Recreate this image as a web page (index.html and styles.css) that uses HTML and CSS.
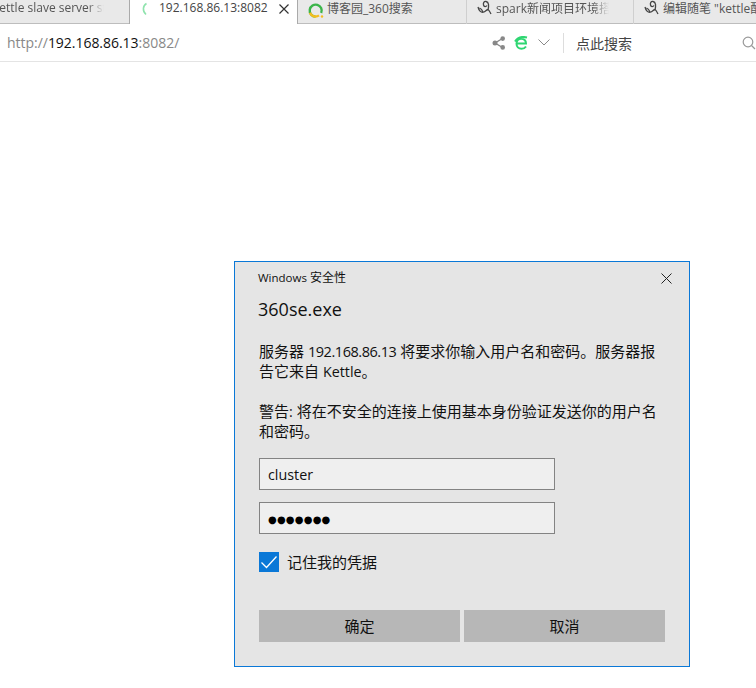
FILE: index.html
```html
<!DOCTYPE html>
<html lang="zh-CN">
<head>
<meta charset="utf-8">
<title>192.168.86.13:8082</title>
<link rel="stylesheet" href="styles.css">
</head>
<body>
<div class="tabs">
  <div class="tab tab-first"><span class="tab-text fade first-text">kettle slave server status</span></div>
  <div class="tab tab-active">
    <svg class="ic-spin" width="10" height="14" viewBox="0 0 10 14"><path d="M7.5 1.5C4 3.5 3 9 7 12.5" fill="none" stroke="#8fe3ad" stroke-width="1.6"/></svg>
    <span class="tab-text active-text">192.168.86.13:8082</span>
    <svg class="ic-close" width="10" height="10" viewBox="0 0 10 10"><path d="M.5.5l9 9M9.500.5l-9 9" stroke="#333" stroke-width="1.200" fill="none"/></svg>
  </div>
  <div class="tab tab-third">
    <svg width="17" height="17" viewBox="0 0 17 17"><path d="M14.200 11A6 6 0 1 0 8.500 14.600" fill="none" stroke="#3cb54a" stroke-width="2.400"/><path d="M2.900 10.800A6 6 0 0 0 12 13.400" fill="none" stroke="#f5bd1f" stroke-width="2.400"/><circle cx="15" cy="14.500" r="1.200" fill="#f5bd1f"/></svg>
    <span class="tab-text">博客园_360搜索</span>
  </div>
  <div class="tab tab-fourth">
    <svg width="15" height="15" viewBox="0 0 15 15"><path d="M1 7c1 4 3 6 6 5 2-1 2-2 4-2.500 1 .5 2 2.500 3 4.500M11 10c1-4 1-8-2-8.500C7 1.200 6 3 6.500 5 7 7 9 7 10 5.500M6 12C5 9.500 4 8.500 2.500 8" fill="none" stroke="#444" stroke-width="1.300"/></svg>
    <span class="tab-text fade">spark新闻项目环境搭建</span>
  </div>
  <div class="tab tab-last">
    <svg width="15" height="15" viewBox="0 0 15 15"><path d="M1 7c1 4 3 6 6 5 2-1 2-2 4-2.500 1 .5 2 2.500 3 4.500M11 10c1-4 1-8-2-8.500C7 1.200 6 3 6.500 5 7 7 9 7 10 5.500M6 12C5 9.500 4 8.500 2.500 8" fill="none" stroke="#444" stroke-width="1.300"/></svg>
    <span class="tab-text">编辑随笔 "kettle配</span>
  </div>
</div>
<div class="address">
  <div class="url"><span class="url-dim">http://</span>192.168.86.13<span class="url-dim">:8082/</span></div>
  <div class="tools">
    <svg width="14" height="14" viewBox="0 0 14 14"><path d="M10.500 2.500L3 7l7.500 4.500" fill="none" stroke="#888" stroke-width="1.400"/><circle cx="10.700" cy="2.600" r="2.300" fill="#888"/><circle cx="3" cy="7" r="2.500" fill="#888"/><circle cx="10.700" cy="11.400" r="2.300" fill="#888"/></svg>
    <svg class="ic-e" width="14" height="14" viewBox="0 0 14 14"><path d="M2.500 7.500h9.500C12 4.500 10 2.800 7.300 2.800 4.300 2.800 2.500 5 2.500 7.800s2 5 5 5c2 0 3.500-.8 4.500-2.300M1 5.500C3.500 1.500 8 .2 13 1.500" fill="none" stroke="#2fd672" stroke-width="2"/></svg>
    <svg class="ic-chev" width="12" height="7" viewBox="0 0 12 7"><path d="M.5.5L6 6l5.500-5.500" fill="none" stroke="#8a8a8a"/></svg>
    <div class="divider"></div>
    <div class="search-hint">点此搜索</div>
    <svg class="ic-search" width="14" height="14" viewBox="0 0 14 14"><circle cx="6" cy="6" r="4.800" fill="none" stroke="#999" stroke-width="1.200"/><path d="M9.500 9.500l3.500 3.500" stroke="#999" stroke-width="1.200"/></svg>
  </div>
</div>
<div class="dialog">
  <div class="dialog-head">
    <span class="dialog-caption"><span class="lat-sm">Windows</span> 安全性</span>
    <svg width="11" height="11" viewBox="0 0 11 11"><path d="M.5.5l10 10M10.500.5l-10 10" stroke="#222" fill="none"/></svg>
  </div>
  <div class="dialog-title">360se.exe</div>
  <p class="dialog-msg">服务器 <span class="lat-num">192.168.86.13</span> 将要求你输入用户名和密码。服务器报告它来自 <span class="lat">Kettle</span>。</p>
  <p class="dialog-msg">警告<span class="lat">:</span> 将在不安全的连接上使用基本身份验证发送你的用户名和密码。</p>
  <div class="field"><span class="lat">cluster</span></div>
  <div class="field field-pass"><span class="dots">●●●●●●●</span></div>
  <div class="remember">
    <span class="check"><svg width="20" height="20" viewBox="0 0 20 20"><path d="M2.500 10.500l5 5L17.500 4.500" fill="none" stroke="#fff" stroke-width="1.300"/></svg></span>
    <span>记住我的凭据</span>
  </div>
  <div class="buttons">
    <div class="btn">确定</div>
    <div class="btn">取消</div>
  </div>
</div>
</body>
</html>
```

FILE: styles.css
```css
* { box-sizing: border-box; }
html, body { margin: 0; padding: 0; }
body {
  width: 756px;
  height: 688px;
  position: relative;
  overflow: hidden;
  background: #fff;
  font-family: "Open Sans", "Noto Sans CJK SC", sans-serif;
  color: #111;
}
svg { flex: none; }
.tabs {
  display: flex;
  height: 24px;
  background: #e9e9e9;
  border-bottom: 1px solid #bdbdbd;
  font-size: 12px;
  color: #555;
}
.tab {
  height: 24px;
  display: flex;
  align-items: center;
  overflow: hidden;
  border-right: 1px solid #cfcfcf;
  padding-bottom: 9px;
  flex: none;
}
.tab-text { white-space: nowrap; overflow: hidden; }
.fade {
  -webkit-mask-image: linear-gradient(to right, #000 85%, transparent 100%);
  mask-image: linear-gradient(to right, #000 85%, transparent 100%);
}
.tab-first { width: 130px; border-right: 1px solid #aaa; }
.first-text { width: 111px; margin-left: -7px; flex: none; }
.tab-active {
  width: 168px;
  background: #fff;
  border-right: 1px solid #aaa;
  padding-left: 9px;
  padding-right: 8px;
}
.ic-spin, .ic-close { margin-top: 3px; }
.active-text { margin-left: 10px; flex: 1; color: #444; }
.tab-third { width: 169px; padding-left: 9px; gap: 3px; }
.tab-third svg { margin-top: 5px; }
.tab-fourth { width: 167px; padding-left: 10px; gap: 4px; }
.tab-fourth .tab-text { width: 113px; }
.tab-last { flex: 1; padding-left: 10px; gap: 4px; border-right: 0; }
.tab-last .tab-text { flex: none; }
.address {
  height: 38px;
  display: flex;
  align-items: center;
  justify-content: space-between;
  border-bottom: 1px solid #e4e4e4;
  padding-left: 7px;
}
.url { font-size: 14px; color: #111; letter-spacing: -.03px; }
.url-dim { color: #888; }
.tools { display: flex; align-items: center; width: 264px; flex: none; }
.ic-e { margin-left: 8px; }
.ic-chev { margin-left: 10px; }
.divider { width: 1px; height: 20px; background: #ddd; margin-left: 13px; }
.search-hint { font-size: 14px; color: #444; margin-left: 12px; width: 168px; }
.dialog {
  position: absolute;
  left: 234px;
  top: 261px;
  width: 456px;
  height: 406px;
  background: #e5e5e5;
  border: 1px solid #0a78d7;
  padding: 0 24px;
  font-size: 15px;
}
.lat { font-size: 14.300px; line-height: 1; }
.lat-num { font-size: 14.500px; letter-spacing: -.45px; line-height: 1; }
.lat-sm { font-size: 11.500px; line-height: 1; }
.dialog-head {
  height: 32px;
  display: flex;
  align-items: center;
  justify-content: space-between;
  margin-right: -7px;
  margin-left: -1px;
  font-size: 12px;
}
.dialog-caption { margin-top: -2px; }
.dialog-title { font-size: 18px; line-height: 24px; margin: 3px 0 0 -1px; }
.dialog-msg { margin: 20px 0 0; line-height: 20px; width: 404px; }
.dialog-msg + .dialog-msg { margin-top: 20px; }
.field {
  width: 296px;
  height: 32px;
  margin-top: 17px;
  background: #efefef;
  border: 1px solid #838383;
  padding: 3px 0 0 8px;
  display: flex;
  align-items: center;
}
.field-pass { margin-top: 12px; }
.dots { font-size: 10px; letter-spacing: .2px; font-family: "DejaVu Sans", sans-serif; color: #000; }
.remember { display: flex; align-items: center; gap: 8px; margin-top: 17px; }
.check { width: 20px; height: 20px; background: #0a78d7; display: block; }
.check svg { display: block; }
.buttons { display: flex; gap: 4px; margin-top: 38px; }
.btn {
  width: 201px;
  height: 32px;
  background: #b7b7b7;
  padding-bottom: 2px;
  display: flex;
  align-items: center;
  justify-content: center;
}
```
